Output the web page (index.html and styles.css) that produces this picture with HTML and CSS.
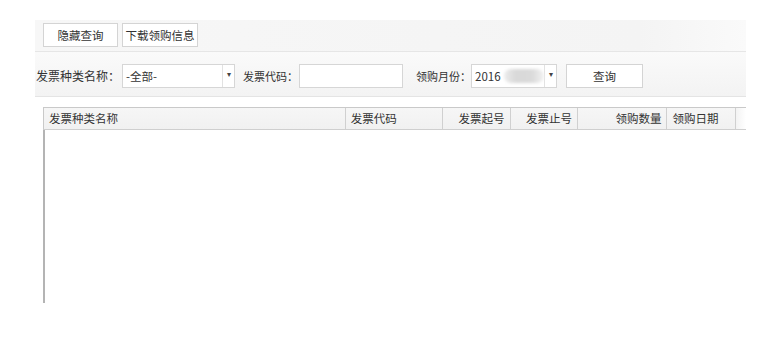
FILE: index.html
```html
<!DOCTYPE html>
<html lang="zh">
<head>
<meta charset="utf-8">
<link rel="stylesheet" href="styles.css">
</head>
<body>
<div class="panel">
  <div class="toolbar">
    <button class="btn btn-hide">隐藏查询</button>
    <button class="btn btn-dl">下载领购信息</button>
  </div>
  <div class="query">
    <span class="label lbl-type">发票种类名称：</span>
    <div class="select sel-type"><span class="val">-全部-</span><span class="arrow">▾</span></div>
    <span class="label lbl-code">发票代码：</span>
    <div class="input inp-code"></div>
    <span class="label lbl-month">领购月份：</span>
    <div class="select sel-month"><span class="val">2016<i class="blur"></i></span><span class="arrow">▾</span></div>
    <button class="btn btn-query">查询</button>
  </div>
  <div class="grid">
    <div class="head">
      <div class="th c1">发票种类名称</div>
      <div class="th c2">发票代码</div>
      <div class="th c3 r">发票起号</div>
      <div class="th c4 r">发票止号</div>
      <div class="th c5 r">领购数量</div>
      <div class="th c6">领购日期</div>
      <div class="th c7"></div>
    </div>
    <div class="body"></div>
  </div>
</div>
</body>
</html>
```
FILE: styles.css
```css
html, body {
  margin: 0;
  padding: 0;
  background: #fff;
}
body {
  font-family: "Noto Sans CJK SC", "Liberation Sans", sans-serif;
  font-size: 11.5px;
  color: #333;
}
.panel {
  margin-left: 35px;
  padding-top: 20px;
  width: 711px;
}
.toolbar {
  height: 32px;
  box-sizing: border-box;
  padding: 3px 0 0 8px;
  display: flex;
  gap: 4px;
  background: linear-gradient(to right, #f7f7f7, #f4f4f4 85%, #fafafa);
  border-bottom: 1px solid #e6e6e6;
}
.btn {
  font-family: inherit;
  font-size: 11.5px;
  color: #333;
  background: #fff;
  border: 1px solid #d4d4d4;
  height: 24px;
  padding: 0;
  line-height: 22px;
  margin: 0;
}
.btn-hide { width: 75px; }
.btn-dl { width: 76px; }
.query {
  height: 45px;
  box-sizing: border-box;
  display: flex;
  align-items: center;
  padding: 3px 0 0 1px;
  background: linear-gradient(to bottom, #fafafa, #f3f3f3);
  border-bottom: 1px solid #e4e4e4;
}
.label {
  white-space: nowrap;
  line-height: 24px;
  font-size: 11px;
}
.lbl-type { font-size: 12px; }
.select, .input {
  height: 24px;
  box-sizing: border-box;
  border: 1px solid #d6d6d6;
  background: #fff;
  display: flex;
}
.select .val {
  flex: 1;
  padding-left: 3px;
  line-height: 22px;
  display: flex;
  align-items: center;
  white-space: nowrap;
}
.select .arrow {
  width: 11px;
  border-left: 1px solid #e2e2e2;
  font-size: 8px;
  line-height: 18px;
  text-align: center;
  color: #444;
}
.sel-type { width: 113px; margin-left: 2px; }
.lbl-code { margin-left: 8px; }
.inp-code { width: 104px; margin-left: 1px; }
.lbl-month { margin-left: 13px; }
.sel-month { width: 86px; }
.blur {
  display: inline-block;
  width: 40px;
  height: 14px;
  margin-left: 3px;
  border-radius: 7px;
  background: linear-gradient(to right, #ececec, #d8d8d8 30%, #dadada 70%, #f2f2f2);
  filter: blur(1.5px);
}
.btn-query { width: 77px; margin-left: 9px; }
.grid {
  margin: 10px 0 0 8px;
}
.head {
  display: flex;
  height: 23px;
  box-sizing: border-box;
  border-top: 1px solid #c9c9c9;
  border-bottom: 1px solid #cfcfcf;
  border-left: 1px solid #c9c9c9;
  background: linear-gradient(to bottom, #f6f6f6, #f1f1f1);
}
.th {
  box-sizing: border-box;
  line-height: 21px;
  padding: 0 5px;
  border-right: 1px solid #d0d0d0;
  white-space: nowrap;
}
.th.r { text-align: right; }
.c1 { width: 304px; }
.c2 { width: 98px; }
.c3 { width: 68px; }
.c4 { width: 68px; }
.c5 { width: 90px; }
.c6 { width: 69px; }
.c7 { width: 10px; border-right: none; background: linear-gradient(to right, #f3f3f3, #fff); }
.body {
  height: 173px;
  border-left: 2px solid #b4b4b4;
}
```
